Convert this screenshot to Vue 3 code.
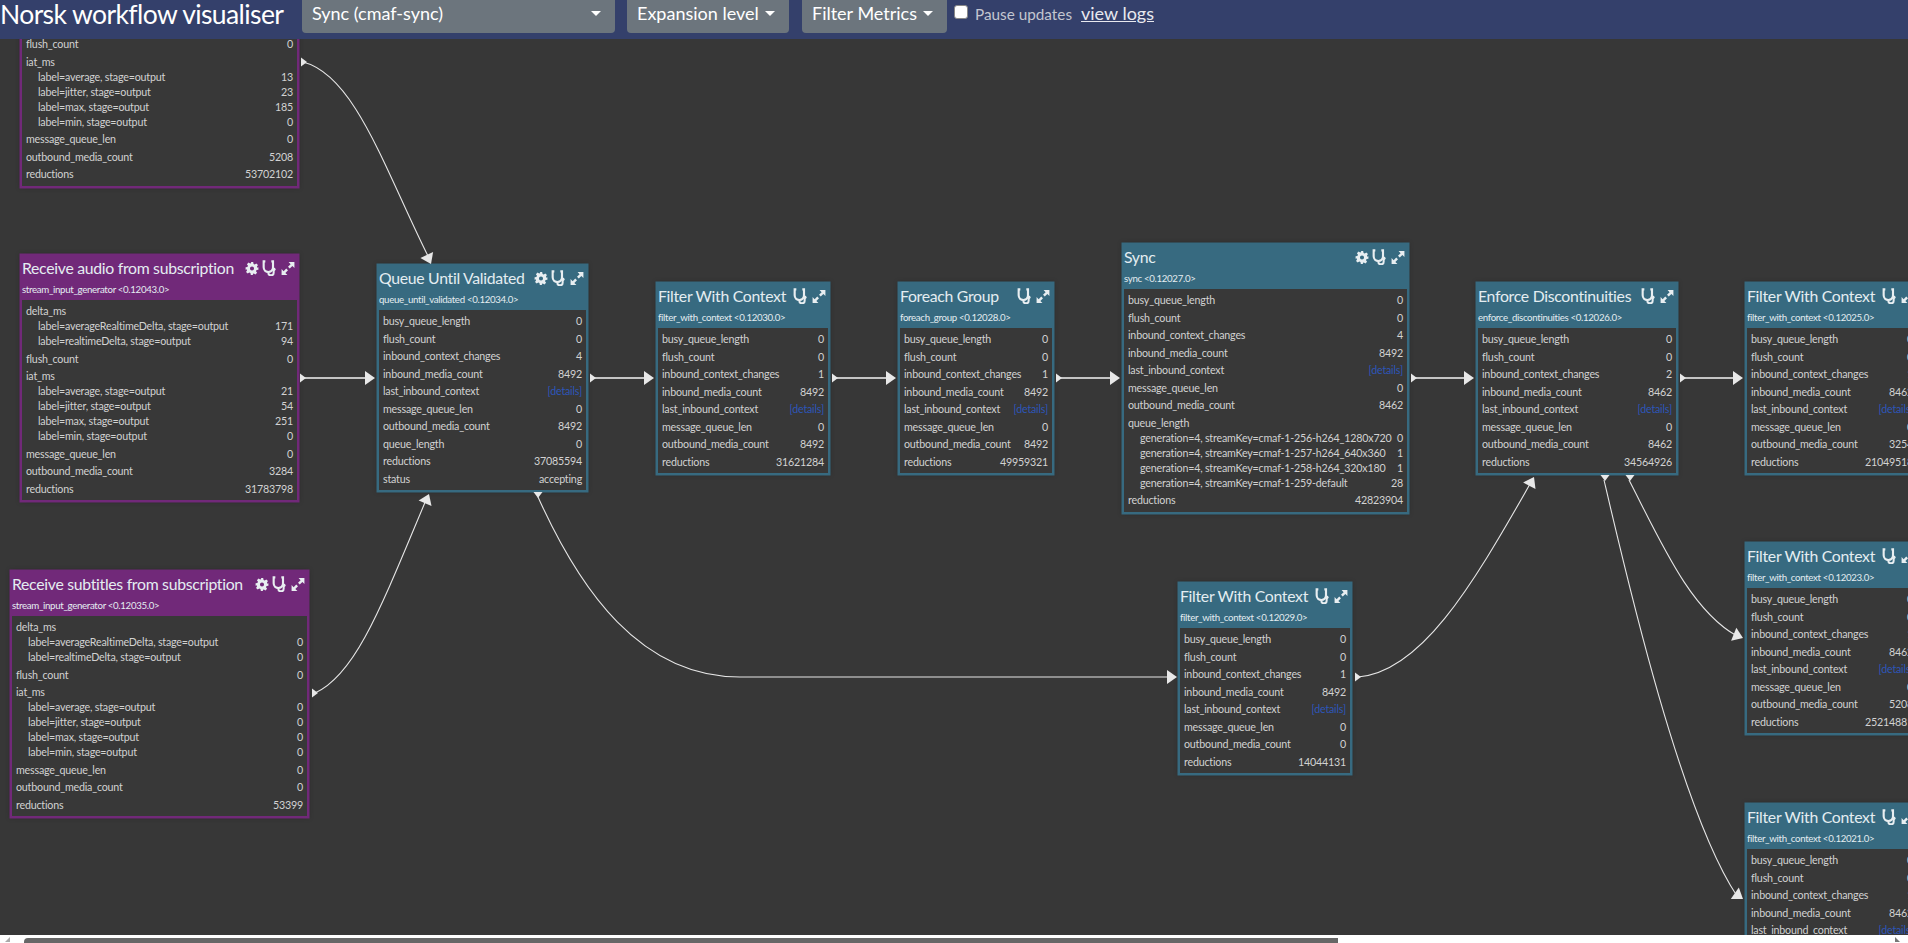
<script setup>
const V = (k, v) => ({ k, v })
const G = (k, kids) => ({ k, kids })
const D = 'details'

const filterRows = (a, b, c, d, e, f, g, h) => [
  V('busy_queue_length', a), V('flush_count', b), V('inbound_context_changes', c), V('inbound_media_count', d),
  V('last_inbound_context', e), V('message_queue_len', f), V('outbound_media_count', g), V('reductions', h)
]
const inputRows = (d1, d2, fl, i1, i2, i3, i4, mq, om, red) => [
  G('delta_ms', [V('label=averageRealtimeDelta, stage=output', d1), V('label=realtimeDelta, stage=output', d2)]),
  V('flush_count', fl),
  G('iat_ms', [V('label=average, stage=output', i1), V('label=jitter, stage=output', i2), V('label=max, stage=output', i3), V('label=min, stage=output', i4)]),
  V('message_queue_len', mq), V('outbound_media_count', om), V('reductions', red)
]

const nodes = [
  { kind: 'input', x: 20, y: 31, w: 279, bare: true, rows: [
    V('flush_count', 0),
    G('iat_ms', [V('label=average, stage=output', 13), V('label=jitter, stage=output', 23), V('label=max, stage=output', 185), V('label=min, stage=output', 0)]),
    V('message_queue_len', 0), V('outbound_media_count', 5208), V('reductions', 53702102)
  ] },
  { kind: 'input', x: 20, y: 254, w: 279, title: 'Receive audio from subscription', sub: 'stream_input_generator <0.12043.0>', gear: true,
    rows: inputRows(171, 94, 0, 21, 54, 251, 0, 0, 3284, 31783798) },
  { kind: 'input', x: 10, y: 570, w: 299, title: 'Receive subtitles from subscription', sub: 'stream_input_generator <0.12035.0>', gear: true,
    rows: inputRows(0, 0, 0, 0, 0, 0, 0, 0, 0, 53399) },
  { kind: 'proc', x: 377, y: 264, w: 211, title: 'Queue Until Validated', sub: 'queue_until_validated <0.12034.0>', gear: true, rows: [
    V('busy_queue_length', 0), V('flush_count', 0), V('inbound_context_changes', 4), V('inbound_media_count', 8492), V('last_inbound_context', D),
    V('message_queue_len', 0), V('outbound_media_count', 8492), V('queue_length', 0), V('reductions', 37085594), V('status', 'accepting')
  ] },
  { kind: 'proc', x: 656, y: 282, w: 174, title: 'Filter With Context', sub: 'filter_with_context <0.12030.0>',
    rows: filterRows(0, 0, 1, 8492, D, 0, 8492, 31621284) },
  { kind: 'proc', x: 898, y: 282, w: 156, title: 'Foreach Group', sub: 'foreach_group <0.12028.0>',
    rows: filterRows(0, 0, 1, 8492, D, 0, 8492, 49959321) },
  { kind: 'proc', x: 1122, y: 243, w: 287, title: 'Sync', sub: 'sync <0.12027.0>', gear: true, rows: [
    V('busy_queue_length', 0), V('flush_count', 0), V('inbound_context_changes', 4), V('inbound_media_count', 8492), V('last_inbound_context', D),
    V('message_queue_len', 0), V('outbound_media_count', 8462),
    G('queue_length', [
      V('generation=4, streamKey=cmaf-1-256-h264_1280x720', 0), V('generation=4, streamKey=cmaf-1-257-h264_640x360', 1),
      V('generation=4, streamKey=cmaf-1-258-h264_320x180', 1), V('generation=4, streamKey=cmaf-1-259-default', 28)
    ]),
    V('reductions', 42823904)
  ] },
  { kind: 'proc', x: 1476, y: 282, w: 202, title: 'Enforce Discontinuities', sub: 'enforce_discontinuities <0.12026.0>',
    rows: filterRows(0, 0, 2, 8462, D, 0, 8462, 34564926) },
  { kind: 'proc', x: 1178, y: 582, w: 174, title: 'Filter With Context', sub: 'filter_with_context <0.12029.0>',
    rows: filterRows(0, 0, 1, 8492, D, 0, 0, 14044131) },
  { kind: 'proc', x: 1745, y: 282, w: 174, title: 'Filter With Context', sub: 'filter_with_context <0.12025.0>',
    rows: filterRows(0, 0, 1, 8462, D, 0, 3254, 21049518) },
  { kind: 'proc', x: 1745, y: 542, w: 174, title: 'Filter With Context', sub: 'filter_with_context <0.12023.0>',
    rows: filterRows(0, 0, 1, 8462, D, 0, 5208, 25214881) },
  { kind: 'proc', x: 1745, y: 803, w: 174, title: 'Filter With Context', sub: 'filter_with_context <0.12021.0>',
    rows: filterRows(0, 0, 1, 8462, D, 0, 0, 0) }
]

const edges = [
  { d: 'M303 62 C355 75 385 170 429 258', s: [302, 62], e: [431, 264, 65] },
  { d: 'M303 378 L368 378', s: [301, 378], e: [375, 378, 0] },
  { d: 'M315 693 C355 675 380 610 426 500', s: [313, 693], e: [429, 494, -67] },
  { d: 'M592 378 L647 378', s: [591, 378], e: [654, 378, 0] },
  { d: 'M834 378 L889 378', s: [833, 378], e: [896, 378, 0] },
  { d: 'M1058 378 L1113 378', s: [1057, 378], e: [1120, 378, 0] },
  { d: 'M1413 378 L1467 378', s: [1412, 378], e: [1474, 378, 0] },
  { d: 'M1682 378 L1736 378', s: [1681, 378], e: [1743, 378, 0] },
  { d: 'M538 497 C580 590 640 677 740 677 L1170 677', s: [536, 495, 90], e: [1177, 677, 0] },
  { d: 'M1358 677 C1420 672 1470 590 1530 484', s: [1356, 677], e: [1534, 477, -62] },
  { d: 'M1629 480 C1660 540 1690 610 1737 636', s: [1628, 478, 90], e: [1743, 638, 22] },
  { d: 'M1604 480 C1625 570 1680 810 1737 896', s: [1603, 478, 90], e: [1743, 899, 35] }
]
</script>

<template>
  <div class="app">
    <header class="topbar">
      <span class="brand">Norsk workflow visualiser</span>
      <button class="drop select"><span>Sync (cmaf-sync)</span><i class="caret"></i></button>
      <button class="drop expansion"><span>Expansion level</span><i class="caret"></i></button>
      <button class="drop metrics"><span>Filter Metrics</span><i class="caret"></i></button>
      <label class="pause"><input type="checkbox" class="check" /><span>Pause updates</span></label>
      <a class="logs">view logs</a>
    </header>

    <main class="canvas">
      <svg class="edges" width="1908" height="943" viewBox="0 0 1908 943">
        <g v-for="(e, i) in edges" :key="i">
          <path :d="e.d" class="line" :class="{ thick: !e.d.includes('C') }" />
          <polygon points="-3,-4.5 3,0 -3,4.5" class="head"
            :transform="`translate(${e.s[0] + 2} ${e.s[1]}) rotate(${e.s[2] || 0})`" />
          <polygon points="-10,-7 0,0 -10,7" class="head"
            :transform="`translate(${e.e[0]} ${e.e[1]}) rotate(${e.e[2]})`" />
        </g>
      </svg>

      <section v-for="(n, i) in nodes" :key="i" class="node" :class="n.kind"
        :style="{ left: n.x + 'px', top: n.y + 'px', width: n.w + 'px' }">
        <div v-if="!n.bare" class="head-block">
          <div class="title-row">
            <span class="title">{{ n.title }}</span>
            <span class="icons">
              <svg v-if="n.gear" class="ic gear" viewBox="0 0 24 24">
                <path fill-rule="evenodd" d="M10 1h4l.7 3.2c.7.2 1.3.5 1.9.9l2.8-1.8 2.800 2.800-1.800 2.800c.4.6.7 1.200.9 1.900L23 10v4l-3.200.7c-.2.7-.5 1.300-.9 1.900l1.800 2.800-2.800 2.800-2.800-1.800c-.6.4-1.200.7-1.900.9L14 23h-4l-.7-3.200c-.7-.2-1.300-.5-1.900-.9l-2.800 1.800-2.800-2.800 1.800-2.800c-.4-.6-.7-1.200-.9-1.900L1 14v-4l3.200-.7c.2-.7.5-1.300.9-1.900L3.300 4.600l2.800-2.800 2.800 1.800c.6-.4 1.200-.7 1.900-.9L10 1zm2 7.500a3.500 3.500 0 1 0 0 7 3.500 3.500 0 0 0 0-7z" />
              </svg>
              <svg class="ic steth" viewBox="0 0 24 24">
                <path d="M5 2H2.500v9a7 7 0 0 0 14 0V2H14" fill="none" stroke-width="3.200" />
                <path d="M9.500 18v1a4 4 0 0 0 8 0v-3" fill="none" stroke-width="3" />
                <circle cx="17.500" cy="14" r="2.800" />
              </svg>
              <svg class="ic expand" viewBox="0 0 24 24">
                <path d="M13 1h10v10l-3.500-3.500-4.500 4.500-3-3 4.500-4.500zM11 23H1V13l3.500 3.500 4.500-4.500 3 3-4.500 4.500z" />
              </svg>
            </span>
          </div>
          <div class="sub">{{ n.sub }}</div>
        </div>
        <div class="body">
          <div v-for="r in n.rows" :key="r.k" class="row">
            <div class="line-item">
              <span>{{ r.k }}</span>
              <a v-if="r.v === 'details'" class="details">[details]</a>
              <span v-else-if="!r.kids">{{ r.v }}</span>
            </div>
            <div v-for="c in r.kids || []" :key="c.k" class="line-item kid">
              <span>{{ c.k }}</span><span>{{ c.v }}</span>
            </div>
          </div>
        </div>
      </section>
    </main>

    <div class="hscroll">
      <i class="arrow left"></i>
      <div class="thumb"></div>
      <i class="arrow right"></i>
    </div>
  </div>
</template>

<style>
html, body { margin: 0; background: #373737; overflow: hidden; }
</style>

<style scoped>
.app {
  position: relative;
  width: 1908px;
  height: 943px;
  overflow: hidden;
  font-family: "Lato", "Liberation Sans", sans-serif;
  background: #373737;
}
.topbar {
  position: relative;
  z-index: 3;
  display: flex;
  align-items: flex-start;
  height: 39px;
  background: #34406b;
  color: #fff;
}
.brand {
  font-size: 26.500px;
  letter-spacing: -.6px;
  font-weight: 400;
  line-height: 28px;
  width: 302px;
  flex: none;
  white-space: nowrap;
}
.drop {
  display: flex;
  align-items: center;
  justify-content: space-between;
  flex: none;
  box-sizing: border-box;
  height: 33px;
  padding: 0 14px 7px 10px;
  margin-right: 13px;
  border: 0;
  border-radius: 0 0 4px 4px;
  background: #6c757d;
  color: #fff;
  font: 400 18px "Lato", sans-serif;
}
.select { width: 313px; margin-right: 12px; }
.expansion { width: 162px; }
.metrics { width: 145px; margin-right: 7px; }
.caret {
  width: 0;
  height: 0;
  border-left: 5px solid transparent;
  border-right: 5px solid transparent;
  border-top: 5px solid #fff;
}
.pause {
  display: flex;
  align-items: center;
  gap: 7px;
  color: #c3c6d0;
  font-size: 15.300px;
  font-weight: 400;
  height: 28px;
}
.check {
  width: 14px;
  height: 14px;
  margin: 0 0 4px;
  appearance: none;
  background: #fff;
  border-radius: 3px;
  border: 1px solid #888;
}
.logs {
  margin-left: 9px;
  color: #e8e9ef;
  font-size: 18px;
  font-weight: 400;
  line-height: 26px;
  text-decoration: underline;
}
.canvas { position: absolute; inset: 0; overflow: hidden; }
.edges { position: absolute; left: 0; top: 0; z-index: 2; pointer-events: none; }
.line { fill: none; stroke: #e6e6e6; stroke-width: 1.100; }
.line.thick { stroke-width: 2; stroke: #c4c4c4; }
.head { fill: #e8e8e8; }
.node {
  position: absolute;
  box-sizing: border-box;
  border: 2px solid var(--c);
  background: #383838;
  color: #d2d2d2;
  box-shadow: 0 0 0 .5px var(--c), 0 0 5px rgba(0, 0, 0, .22);
}
.proc { --c: #376a80; }
.input { --c: #712979; }
.head-block {
  height: 44px;
  background: var(--c);
  color: #e4edf1;
  box-sizing: border-box;
}
.title-row {
  display: flex;
  align-items: center;
  justify-content: space-between;
  height: 24px;
}
.title { font-size: 15.800px; letter-spacing: -.3px; font-weight: 400; white-space: nowrap; line-height: 24px; }
.sub { font-size: 9.700px; letter-spacing: -.33px; line-height: 18px; font-weight: 400; white-space: nowrap; }
.icons { display: flex; align-items: center; gap: 3px; margin-right: 2px; flex: none; }
.ic { width: 14px; height: 15px; fill: #e8eef1; stroke: #e8eef1; stroke-width: 0; }
.steth { width: 16px; height: 16px; }
.steth path { stroke: #e8eef1; }
.body { padding: 2px 2px 3px 2px; }
.row { padding: 1.250px 2px; }
.line-item {
  display: flex;
  justify-content: space-between;
  height: 15px;
  line-height: 15px;
  font-size: 10.700px;
  letter-spacing: -.2px;
  font-weight: 400;
  white-space: nowrap;
}
.kid { padding-left: 12px; }
.details { color: #2d56b8; }
.hscroll {
  position: absolute;
  z-index: 4;
  left: 0;
  right: 0;
  bottom: 0;
  height: 8px;
  background: #fff;
}
.thumb {
  position: absolute;
  left: 24px;
  top: 3px;
  width: 1314px;
  height: 5px;
  border-radius: 4px 0 0 0;
  background: #666;
}
.arrow { position: absolute; width: 0; height: 0; }
.arrow.left { left: 5px; top: 2px; border-bottom: 5px solid #aaa; border-left: 5px solid transparent; }
.arrow.right { right: 8px; top: 2px; border-bottom: 5px solid #777; border-right: 5px solid transparent; }
</style>
